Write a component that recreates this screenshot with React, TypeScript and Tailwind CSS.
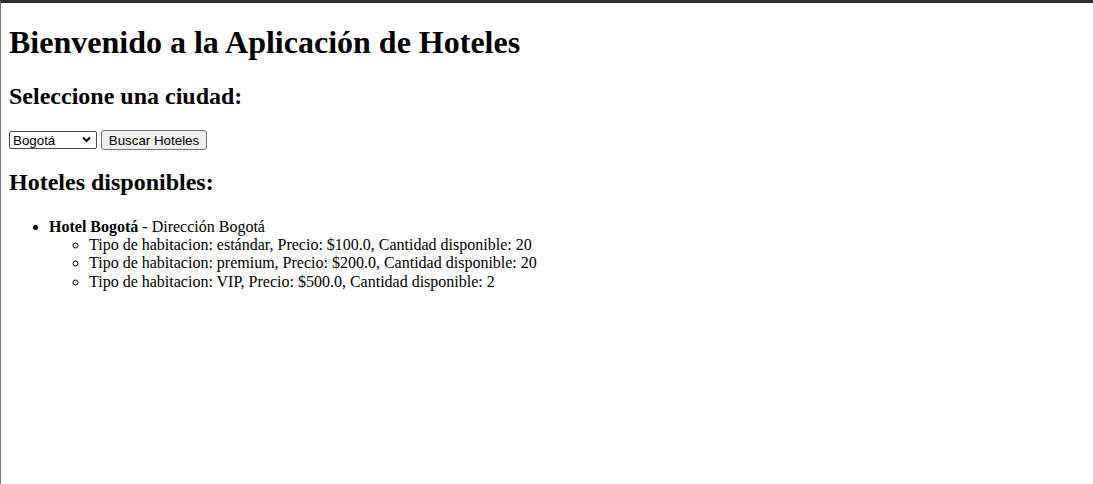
import React from "react";

const rooms = [
  { tipo: "estándar", precio: "100.0", cantidad: 20 },
  { tipo: "premium", precio: "200.0", cantidad: 20 },
  { tipo: "VIP", precio: "500.0", cantidad: 2 },
];

export default function App() {
  return (
    <div className="min-h-screen box-border border-t-[3px] border-t-[#2e2e2e] border-l border-l-[#7a7a7a] bg-white text-black font-['Liberation_Serif','Times_New_Roman',serif] text-[16px] leading-[18.4px]">
      <div className="px-2 flow-root">
        <h1 className="text-[32px] font-bold leading-[36.8px] my-[21.44px]">
          Bienvenido a la Aplicación de Hoteles
        </h1>
        <h2 className="text-[24px] font-bold leading-[27.6px] my-[19.92px]">
          Seleccione una ciudad:
        </h2>
        <div className="flex items-start gap-1 h-[19px]">
          <div className="relative mt-[1px]">
            <select
              defaultValue="Bogotá"
              className="appearance-none block box-border w-[88px] h-[18px] border border-[#4a4a4a] rounded-[2px] bg-white pl-[3px] text-[13.33px] leading-[15px] font-['Liberation_Sans',Arial,sans-serif] text-black"
            >
              <option>Bogotá</option>
              <option>Medellín</option>
              <option>Cartagena</option>
              <option>Cali</option>
            </select>
            <svg
              className="absolute right-[6px] top-[5px] pointer-events-none"
              width="9"
              height="7"
              viewBox="0 0 9 7"
            >
              <path d="M1 1.5 L4.5 5 L8 1.5" fill="none" stroke="#000" strokeWidth="2" />
            </svg>
          </div>
          <button className="box-border w-[106px] h-[20px] border border-[#767676] rounded-[3px] bg-[#efefef] text-[13.33px] leading-[15px] font-['Liberation_Sans',Arial,sans-serif] text-black text-center">
            Buscar Hoteles
          </button>
        </div>
        <h2 className="text-[24px] font-bold leading-[27.6px] my-[19.92px]">
          Hoteles disponibles:
        </h2>
        <ul className="list-disc pl-10 mt-[21px] mb-4 leading-[18.4px]">
          <li>
            <strong className="font-bold">Hotel Bogotá</strong> - Dirección Bogotá
            <ul className="list-[circle] pl-10">
              {rooms.map((r) => (
                <li key={r.tipo}>
                  Tipo de habitacion: {r.tipo}, Precio: ${r.precio}, Cantidad disponible: {r.cantidad}
                </li>
              ))}
            </ul>
          </li>
        </ul>
      </div>
    </div>
  );
}
